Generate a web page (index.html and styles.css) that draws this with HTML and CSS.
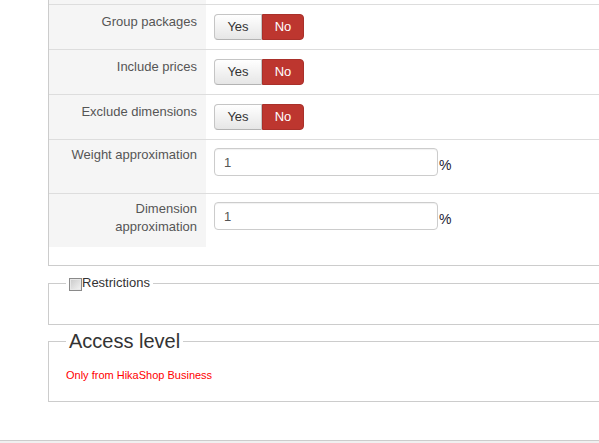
FILE: index.html
```html
<!DOCTYPE html>
<html lang="en">
<head>
  <meta charset="UTF-8" />
  <title>Shipping options</title>
  <link rel="stylesheet" href="styles.css">
</head>
<body>
  <div class="page">
    <!-- Main shipping parameters -->
    <fieldset class="adminform params">
      <table class="paramlist">
        <tr class="spacer">
          <td class="key"></td>
          <td></td>
        </tr>
        <tr>
          <td class="key">Group packages</td>
          <td>
            <div class="toggle">
              <span class="btn">Yes</span>
              <span class="btn no">No</span>
            </div>
          </td>
        </tr>
        <tr>
          <td class="key">Include prices</td>
          <td>
            <div class="toggle">
              <span class="btn">Yes</span>
              <span class="btn no">No</span>
            </div>
          </td>
        </tr>
        <tr>
          <td class="key">Exclude dimensions</td>
          <td>
            <div class="toggle">
              <span class="btn">Yes</span>
              <span class="btn no">No</span>
            </div>
          </td>
        </tr>
        <tr class="input-row">
          <td class="key">Weight approximation</td>
          <td><input type="text" value="1" /><span class="unit">%</span></td>
        </tr>
        <tr class="input-row">
          <td class="key">Dimension approximation</td>
          <td><input type="text" value="1" /><span class="unit">%</span></td>
        </tr>
      </table>
    </fieldset>

    <!-- Restrictions -->
    <fieldset class="adminform small">
      <legend class="check-legend"><input type="checkbox" class="check" />Restrictions</legend>
    </fieldset>

    <!-- Access level -->
    <fieldset class="adminform access">
      <legend class="big-legend">Access level</legend>
      <div class="business">Only from HikaShop Business</div>
    </fieldset>
  </div>

  <div class="footer"></div>
</body>
</html>
```

FILE: styles.css
```css
/* General */
body {
  margin: 0;
  font-family: 'Liberation Sans', Arial, sans-serif;
  font-size: 13px;
  line-height: 18px;
  color: #333;
  background: #fff;
  overflow: hidden;
}

.page {
  padding-left: 48px;
  height: 440px;
}

/* Fieldsets */
fieldset.adminform {
  width: 620px;
  margin: 0;
  border: 1px solid #ccc;
  padding: 0 0 18px 17px;
  box-sizing: border-box;
}

fieldset.params {
  padding-left: 0;
  border-top: 0;
}

fieldset.small {
  margin-top: 8px;
  height: 51px;
}

fieldset.access {
  margin-top: 4px;
  height: 73px;
}

legend {
  padding: 0 3px;
}

.check-legend {
  display: flex;
  align-items: center;
  line-height: 18px;
}

.check {
  appearance: none;
  -webkit-appearance: none;
  width: 13px;
  height: 13px;
  margin: 2px 0 0;
  border: 1px solid #8a8a8a;
  background: linear-gradient(135deg, #c9c9c9, #f4f4f4);
  box-shadow: inset 0 0 0 1px #e8e8e8;
  box-sizing: border-box;
}

.big-legend {
  font-size: 20px;
  line-height: 24px;
  color: #333;
}

.business {
  margin-top: 13px;
  font-size: 11px;
  color: #f00;
}

/* Param table */
table.paramlist {
  width: 100%;
  border-collapse: collapse;
}

.paramlist td {
  border-top: 1px solid #ddd;
  padding: 9px 8px;
  vertical-align: top;
}

.paramlist td.key {
  width: 140px;
  background-color: #f5f5f5;
  text-align: right;
  color: #555;
  padding: 8px 9px 6px 8px;
}

.paramlist .spacer td,
.paramlist .spacer td.key {
  border-top: 0;
  padding: 0;
  height: 4px;
}

.paramlist .input-row td {
  padding: 8px 8px 17px;
}

.paramlist .input-row td.key {
  padding: 6px 9px 6px 8px;
}

/* Yes / No toggle */
.toggle {
  display: flex;
  height: 26px;
}

.btn {
  display: flex;
  align-items: center;
  justify-content: center;
  box-sizing: border-box;
  height: 26px;
  width: 48px;
  color: #333;
  background: linear-gradient(#fff, #e6e6e6);
  border: 1px solid #c5c5c5;
  border-bottom-color: #b3b3b3;
  border-radius: 4px 0 0 4px;
}

.btn.no {
  width: 42px;
  color: #fff;
  background: #bd362f;
  border-color: #a9302a;
  border-radius: 0 4px 4px 0;
}

/* Inputs */
.paramlist input {
  width: 224px;
  height: 28px;
  box-sizing: border-box;
  margin: 0;
  padding: 4px 9px;
  border: 1px solid #ccc;
  border-radius: 4px;
  font-family: inherit;
  font-size: 13px;
  color: #555;
  vertical-align: middle;
  box-shadow: inset 0 1px 1px rgba(0, 0, 0, 0.06);
}

.unit {
  margin-left: 1px;
  font-size: 14px;
  color: #223;
  vertical-align: -5px;
}

/* Footer line */
.footer {
  border-top: 1px solid #ccc;
  background: #f0f0f0;
  height: 10px;
}
```
